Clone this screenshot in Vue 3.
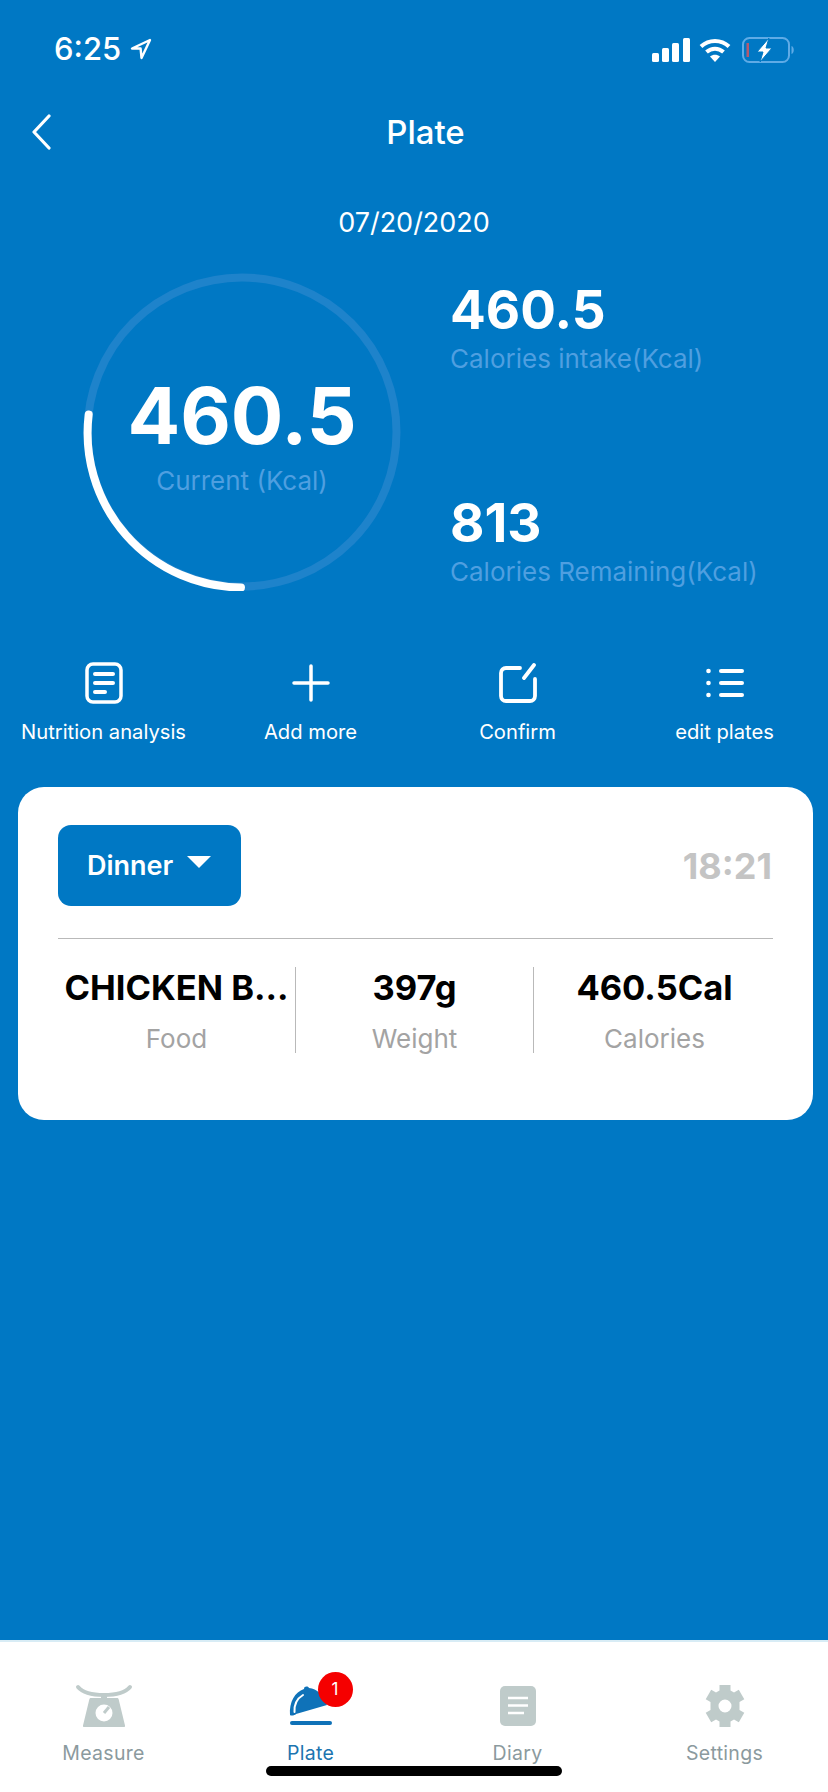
<template>
  <div class="page">
    <div class="status">
      <div class="status-left">
        <span class="clock">6:25</span>
        <svg class="loc" viewBox="0 0 22 22"><path d="M20 2 2 10.500h8.600L11.500 20z" fill="none" stroke="#fff" stroke-width="2.400" stroke-linejoin="round" /></svg>
      </div>
      <div class="status-right">
        <svg class="signal" viewBox="0 0 38 24" fill="#fff">
          <rect x="0" y="15" width="7" height="9" rx="1.500" />
          <rect x="10" y="10" width="7" height="14" rx="1.500" />
          <rect x="20" y="5" width="7" height="19" rx="1.500" />
          <rect x="31" y="0" width="7" height="24" rx="1.500" />
        </svg>
        <svg class="wifi" viewBox="0 0 32 24" fill="none" stroke="#fff" stroke-width="4">
          <path d="M2 8.500c8-7.500 20-7.500 28 0" />
          <path d="M7.500 14c5-4.500 12-4.500 17 0" />
          <path d="M16 24l-5-5.500c3-2.500 7-2.500 10 0z" fill="#fff" stroke="none" />
        </svg>
        <svg class="battery" viewBox="0 0 53 26">
          <rect x="1" y="1" width="46" height="24" rx="6.500" fill="none" stroke="#5fabe6" stroke-width="2" />
          <rect x="4.500" y="6" width="2.500" height="14" fill="#b4596f" />
          <path d="M49.500 9c3 1 3 7 0 8z" fill="#5fabe6" />
          <path d="M27 1 15 15h6l-3 10 12-14h-6l3-10z" fill="#fff" stroke="#0078c4" stroke-width="1" />
        </svg>
      </div>
    </div>

    <div class="nav">
      <svg class="back" viewBox="0 0 20 36"><path d="M18 2 3 18l15 16" fill="none" stroke="#fff" stroke-width="3.200" stroke-linecap="round" stroke-linejoin="round" /></svg>
      <div class="nav-title">Plate</div>
    </div>

    <div class="date">07/20/2020</div>

    <div class="stats">
      <div class="ring">
        <svg viewBox="0 0 318 318">
          <circle cx="159" cy="159" r="154.500" fill="none" stroke="#1e83cb" stroke-width="8" />
          <path d="M5.700 141.500A154.500 154.500 0 0 0 158 314.500" fill="none" stroke="#fff" stroke-width="8" stroke-linecap="round" />
        </svg>
        <div class="ring-text">
          <div class="ring-num">460.5</div>
          <div class="ring-label">Current (Kcal)</div>
        </div>
      </div>
      <div class="side">
        <div class="side-item" v-for="s in sideStats" :key="s.label">
          <div class="side-num">{{ s.value }}</div>
          <div class="side-label">{{ s.label }}</div>
        </div>
      </div>
    </div>

    <div class="actions">
      <div class="action">
        <div class="action-icon">
          <svg width="38" height="42" viewBox="0 0 38 42" fill="none" stroke="#fff">
            <rect x="2" y="2" width="34" height="38" rx="6" stroke-width="3.500" />
            <path d="M10 12h18M10 21h18M10 30h10" stroke-width="4" stroke-linecap="round" />
          </svg>
        </div>
        <span>Nutrition analysis</span>
      </div>
      <div class="action">
        <div class="action-icon">
          <svg width="38" height="38" viewBox="0 0 38 38" fill="none" stroke="#fff" stroke-width="3.500" stroke-linecap="round">
            <path d="M19 2v34M2 19h34" />
          </svg>
        </div>
        <span>Add more</span>
      </div>
      <div class="action">
        <div class="action-icon">
          <svg width="38" height="40" viewBox="0 0 38 40" fill="none" stroke="#fff" stroke-width="3.800" stroke-linecap="round">
            <path d="M21 5H7a5 5 0 0 0-5 5v23a5 5 0 0 0 5 5h24a5 5 0 0 0 5-5V16" />
            <path d="M25 15l10-13" />
          </svg>
        </div>
        <span>Confirm</span>
      </div>
      <div class="action">
        <div class="action-icon">
          <svg width="38" height="30" viewBox="0 0 38 30" fill="#fff">
            <rect x="13" y="1" width="25" height="4" rx="2" />
            <rect x="13" y="13" width="25" height="4" rx="2" />
            <rect x="13" y="25" width="25" height="4" rx="2" />
            <circle cx="2.500" cy="3" r="2.300" />
            <circle cx="2.500" cy="15" r="2.300" />
            <circle cx="2.500" cy="27" r="2.300" />
          </svg>
        </div>
        <span>edit plates</span>
      </div>
    </div>

    <div class="card">
      <div class="card-head">
        <div class="meal">
          <span>Dinner</span>
          <i class="caret"></i>
        </div>
        <div class="time">18:21</div>
      </div>
      <div class="cols">
        <div class="col" v-for="c in columns" :key="c.label">
          <div class="col-value">{{ c.value }}</div>
          <div class="col-label">{{ c.label }}</div>
        </div>
      </div>
    </div>

    <div class="spacer"></div>

    <div class="tabs">
      <div class="tab">
        <div class="tab-icon">
          <svg width="58" height="44" viewBox="0 0 58 44">
            <path d="M3 3c5 6 14 8 26 8s21-2 26-8" fill="none" stroke="#bfcbca" stroke-width="4" stroke-linecap="round" />
            <path d="M26 10h6v4h10c1 0 1.500.5 1.700 1.500L50 41.500c.2 1-.3 1.500-1.200 1.500H9.200c-.9 0-1.400-.5-1.200-1.500l6.300-26c.2-1 .7-1.500 1.700-1.500h10z" fill="#bfcbca" />
            <circle cx="29" cy="29" r="8.500" fill="#fff" />
            <path d="M29 29l5-6" stroke="#bfcbca" stroke-width="3" />
          </svg>
        </div>
        <span>Measure</span>
      </div>
      <div class="tab tab-active">
        <div class="tab-icon plate-icon">
          <svg width="44" height="44" viewBox="0 0 44 44" fill="#0f72b8">
            <path d="M1 31C0 18 6 8 15 5c0-3 4-3 5-1 8 1 14 6 18 17L7 30c-1 1.500-5 2-6 1z" />
            <path d="M5.500 28C5 20 9 14 14 11" fill="none" stroke="#fff" stroke-width="2" stroke-linecap="round" />
            <rect x="1" y="37" width="42" height="4" rx="2" />
          </svg>
          <b class="badge">1</b>
        </div>
        <span>Plate</span>
      </div>
      <div class="tab">
        <div class="tab-icon">
          <svg width="36" height="42" viewBox="0 0 36 42">
            <rect x="0" y="1" width="36" height="40" rx="5" fill="#bfcbca" />
            <path d="M8 13h20M8 20.500h20M8 28h16" stroke="#fff" stroke-width="2.600" />
          </svg>
        </div>
        <span>Diary</span>
      </div>
      <div class="tab">
        <div class="tab-icon">
          <svg width="42" height="42" viewBox="0 0 42 42" fill="#bfcbca">
            <path fill-rule="evenodd" d="M15.500 0h11v5.500l3.500 2 4.800-2.800 5.500 9.600L35.500 17v8l4.800 2.700-5.500 9.600L30 34.500l-3.500 2V42h-11v-5.500l-3.500-2-4.800 2.800-5.500-9.600L6.500 25v-8l-4.800-2.700 5.500-9.600L12 7.500l3.500-2zM21 14.500a6.500 6.500 0 1 0 0 13 6.500 6.500 0 0 0 0-13z" />
          </svg>
        </div>
        <span>Settings</span>
      </div>
      <div class="home-bar"></div>
    </div>
  </div>
</template>

<script setup>
const sideStats = [
  { value: '460.5', label: 'Calories intake(Kcal)' },
  { value: '813', label: 'Calories Remaining(Kcal)' },
]

const columns = [
  { value: 'CHICKEN B...', label: 'Food' },
  { value: '397g', label: 'Weight' },
  { value: '460.5Cal', label: 'Calories' },
]
</script>

<style>
html, body { margin: 0; background: #0078c4; }
</style>

<style scoped>
.page {
  width: 828px;
  height: 1792px;
  background: #0078c4;
  color: #fff;
  font-family: Inter, "Liberation Sans", sans-serif;
  display: flex;
  flex-direction: column;
  overflow: hidden;
}
.status {
  height: 100px;
  box-sizing: border-box;
  padding: 36px 33px 0 54px;
  display: flex;
  justify-content: space-between;
  align-items: flex-start;
}
.status-left { display: flex; align-items: center; gap: 9px; }
.clock { font-size: 31px; font-weight: 500; line-height: 26px; }
.loc { width: 22px; height: 22px; }
.status-right { display: flex; align-items: center; gap: 9px; margin-top: 1px; }
.signal { width: 38px; height: 24px; }
.wifi { width: 32px; height: 24px; }
.battery { width: 53px; height: 26px; margin-left: 2px; }

.nav {
  position: relative;
  height: 66px;
  display: flex;
  align-items: center;
  justify-content: center;
}
.back { position: absolute; left: 31px; top: 14px; width: 20px; height: 36px; }
.nav-title { font-size: 33px; font-weight: 500; margin: -2px 0 0 23px; }

.date {
  margin-top: 39px;
  text-align: center;
  font-size: 27px;
  line-height: 36px;
}

.stats {
  margin-top: 32px;
  padding-left: 83px;
  display: flex;
}
.ring {
  position: relative;
  width: 318px;
  height: 318px;
  flex: none;
}
.ring svg { display: block; width: 318px; height: 318px; }
.ring-text {
  position: absolute;
  inset: 0;
  display: flex;
  flex-direction: column;
  align-items: center;
  padding-top: 103px;
  box-sizing: border-box;
}
.ring-num { font-size: 78px; font-weight: 700; line-height: 80px; }
.ring-label { font-size: 26px; line-height: 34px; margin-top: 8px; color: #4f9fe0; }
.side {
  margin-left: 49px;
  padding-top: 6px;
  display: flex;
  flex-direction: column;
  gap: 115px;
}
.side-num { font-size: 53px; font-weight: 700; line-height: 62px; }
.side-label { font-size: 26px; line-height: 36px; color: #4f9fe0; white-space: nowrap; }

.actions {
  margin-top: 70px;
  display: grid;
  grid-template-columns: repeat(4, 207px);
}
.action {
  display: flex;
  flex-direction: column;
  align-items: center;
  font-size: 20.200px;
  line-height: 28px;
}
.action-icon {
  height: 44px;
  display: flex;
  align-items: center;
  justify-content: center;
  margin-bottom: 13px;
}
.action-icon svg { display: block; }

.card {
  margin: 41px 15px 0 18px;
  height: 333px;
  box-sizing: border-box;
  padding: 38px 40px 0;
  background: #fff;
  border-radius: 26px;
}
.card-head {
  display: flex;
  justify-content: space-between;
  align-items: center;
  padding-bottom: 32px;
  border-bottom: 1px solid #b9b9b9;
}
.meal {
  width: 183px;
  height: 81px;
  border-radius: 13px;
  background: #0078c4;
  color: #fff;
  display: flex;
  align-items: center;
  box-sizing: border-box;
  padding-left: 29px;
  font-size: 27px;
  font-weight: 600;
}
.caret {
  margin: -8px 0 0 14px;
  border-left: 12px solid transparent;
  border-right: 12px solid transparent;
  border-top: 12px solid #fff;
}
.time { color: #c4c4c4; font-size: 36px; font-weight: 700; margin-right: 1px; }
.cols {
  margin-top: 28px;
  display: grid;
  grid-template-columns: 238px 238px 239px;
}
.col {
  height: 86px;
  display: flex;
  flex-direction: column;
  align-items: center;
  box-sizing: border-box;
  min-width: 0;
  border-right: 1px solid #b9b9b9;
}
.col:last-child { border-right: none; padding-left: 2px; }
.col-value {
  font-size: 34.500px;
  font-weight: 700;
  line-height: 42px;
  color: #000;
  white-space: nowrap;
}
.col-label { margin-top: 13px; font-size: 26px; line-height: 34px; color: #a3a3a3; }

.spacer { flex: 1; }

.tabs {
  position: relative;
  height: 152px;
  flex: none;
  box-sizing: border-box;
  background: #fff;
  border-top: 2px solid #d8ecf5;
  display: grid;
  grid-template-columns: repeat(4, 207px);
}
.tab {
  display: flex;
  flex-direction: column;
  align-items: center;
  padding-top: 41px;
  font-size: 19.500px;
  line-height: 24px;
  color: #8b9a9e;
  letter-spacing: 0.3px;
}
.tab-active { color: #1c75b0; }
.tab-icon {
  height: 46px;
  margin-bottom: 12px;
  display: flex;
  align-items: center;
  justify-content: center;
}
.tab-icon svg { display: block; }
.plate-icon { position: relative; width: 44px; }
.badge {
  position: absolute;
  left: 29px;
  top: -11px;
  width: 35px;
  height: 35px;
  border-radius: 50%;
  background: #f50000;
  color: #fff;
  font-size: 17px;
  font-weight: 400;
  line-height: 35px;
  text-align: center;
}
.home-bar {
  position: absolute;
  left: 266px;
  top: 124px;
  width: 296px;
  height: 10px;
  border-radius: 5px;
  background: #000;
}
</style>
